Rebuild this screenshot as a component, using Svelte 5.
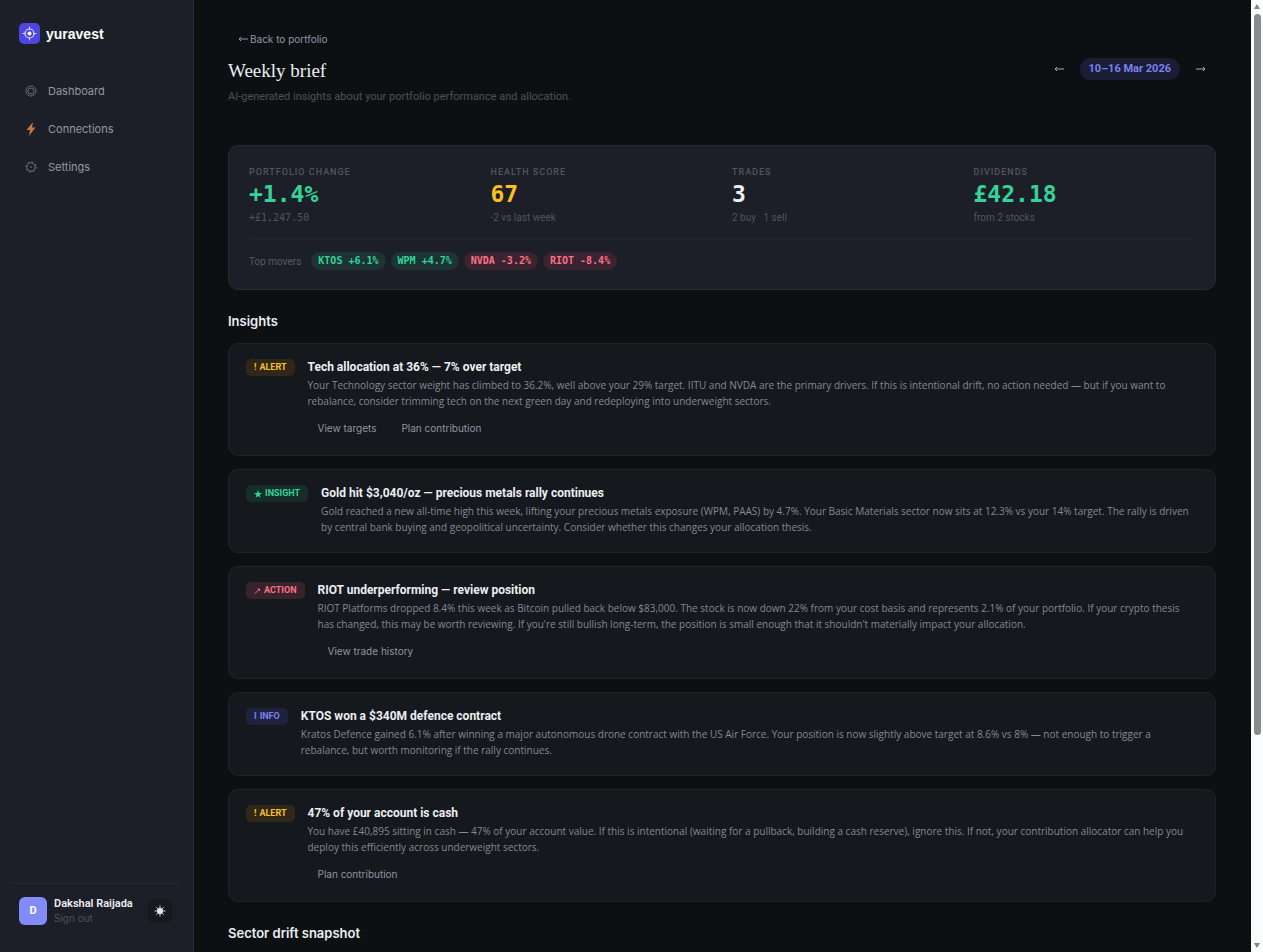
<script lang="ts">
  type Kind = 'alert' | 'insight' | 'action' | 'info';

  const stats = [
    { label: 'Portfolio change', value: '+1.4%', sub: '+£1,247.50', tone: 'green', mono: true },
    { label: 'Health score', value: '67', sub: '-2 vs last week', tone: 'amber' },
    { label: 'Trades', value: '3', sub: '2 buy \u00a0 1 sell', tone: 'plain' },
    { label: 'Dividends', value: '£42.18', sub: 'from 2 stocks', tone: 'green' }
  ];

  const movers = [
    { ticker: 'KTOS', change: '+6.1%' },
    { ticker: 'WPM', change: '+4.7%' },
    { ticker: 'NVDA', change: '-3.2%' },
    { ticker: 'RIOT', change: '-8.4%' }
  ];

  const insights: { kind: Kind; title: string; body: string; actions: string[] }[] = [
    {
      kind: 'alert',
      title: 'Tech allocation at 36% — 7% over target',
      body: 'Your Technology sector weight has climbed to 36.2%, well above your 29% target. IITU and NVDA are the primary drivers. If this is intentional drift, no action needed — but if you want to rebalance, consider trimming tech on the next green day and redeploying into underweight sectors.',
      actions: ['View targets', 'Plan contribution']
    },
    {
      kind: 'insight',
      title: 'Gold hit $3,040/oz — precious metals rally continues',
      body: 'Gold reached a new all-time high this week, lifting your precious metals exposure (WPM, PAAS) by 4.7%. Your Basic Materials sector now sits at 12.3% vs your 14% target. The rally is driven by central bank buying and geopolitical uncertainty. Consider whether this changes your allocation thesis.',
      actions: []
    },
    {
      kind: 'action',
      title: 'RIOT underperforming — review position',
      body: "RIOT Platforms dropped 8.4% this week as Bitcoin pulled back below $83,000. The stock is now down 22% from your cost basis and represents 2.1% of your portfolio. If your crypto thesis has changed, this may be worth reviewing. If you're still bullish long-term, the position is small enough that it shouldn't materially impact your allocation.",
      actions: ['View trade history']
    },
    {
      kind: 'info',
      title: 'KTOS won a $340M defence contract',
      body: 'Kratos Defence gained 6.1% after winning a major autonomous drone contract with the US Air Force. Your position is now slightly above target at 8.6% vs 8% — not enough to trigger a rebalance, but worth monitoring if the rally continues.',
      actions: []
    },
    {
      kind: 'alert',
      title: '47% of your account is cash',
      body: 'You have £40,895 sitting in cash — 47% of your account value. If this is intentional (waiting for a pullback, building a cash reserve), ignore this. If not, your contribution allocator can help you deploy this efficiently across underweight sectors.',
      actions: ['Plan contribution']
    }
  ];
</script>

<div class="app">
  <aside class="sidebar">
    <a class="brand" href="#home">
      <svg width="21" height="21" viewBox="0 0 21 21" fill="none">
        <rect width="21" height="21" rx="5" fill="#4f46e0" />
        <circle cx="10.5" cy="10.5" r="4.5" stroke="#dcdcff" stroke-width="1.2" />
        <circle cx="10.5" cy="10.5" r="2" fill="#fff" />
        <path d="M10.5 4v2M10.5 15v2M4 10.5h2M15 10.5h2" stroke="#dcdcff" stroke-linecap="round" />
      </svg>
      <span>yuravest</span>
    </a>

    <nav>
      <a href="#dashboard">
        <svg width="12" height="12" viewBox="0 0 12 12" fill="none" stroke="#7b7e88">
          <circle cx="6" cy="6" r="5" stroke-width="0.8" />
          <circle cx="6" cy="6" r="3" stroke-width="0.8" />
        </svg>
        Dashboard
      </a>
      <a href="#connections">
        <svg width="12" height="16" viewBox="0 0 12 16">
          <path d="M8 1 1.500 9h3.500L4 15 10.500 6.500H7z" fill="#c9743f" />
        </svg>
        Connections
      </a>
      <a href="#settings">
        <svg width="12" height="12" viewBox="0 0 12 12" fill="none" stroke="#7b7e88">
          <circle cx="6" cy="6" r="4.2" stroke-width="0.8" />
          <circle cx="6" cy="6" r="5.1" stroke-dasharray="1.6 2.4" />
          <circle cx="6" cy="6" r="0.8" fill="#7b7e88" stroke="none" />
        </svg>
        Settings
      </a>
    </nav>

    <div class="account">
      <div class="avatar">D</div>
      <div class="who">
        <strong>Dakshal Raijada</strong>
        <button class="signout">Sign out</button>
      </div>
      <button class="theme" aria-label="Toggle theme">
        <svg width="12" height="12" viewBox="0 0 12 12" stroke="#dfe1e5" stroke-linecap="round">
          <circle cx="6" cy="6" r="3" fill="#eceef2" stroke="none" />
          <path d="M6 1v10M1 6h10M2.500 2.500l7 7M9.500 2.500l-7 7" stroke-width="0.9" />
        </svg>
      </button>
    </div>
  </aside>

  <main>
    <header>
      <div>
        <a class="back" href="#portfolio">
          <svg width="10" height="8" viewBox="0 0 10 8" fill="none" stroke="currentColor"><path d="M10 4H1M3 2 1 4l2 2" /></svg>
          Back to portfolio
        </a>
        <h1>Weekly brief</h1>
        <p>AI-generated insights about your portfolio performance and allocation.</p>
      </div>
      <div class="period">
        <button aria-label="Previous week">
          <svg width="10" height="8" viewBox="0 0 10 8" fill="none" stroke="currentColor"><path d="M10 4H1M3 2 1 4l2 2" /></svg>
        </button>
        <span>10–16 Mar 2026</span>
        <button aria-label="Next week">
          <svg width="10" height="8" viewBox="0 0 10 8" fill="none" stroke="currentColor"><path d="M0 4h9M7 2l2 2-2 2" /></svg>
        </button>
      </div>
    </header>

    <section class="summary">
      <div class="stats">
        {#each stats as s}
          <div>
            <div class="label">{s.label}</div>
            <div class="value {s.tone}">{s.value}</div>
            <div class="sub" class:mono={s.mono}>{s.sub}</div>
          </div>
        {/each}
      </div>
      <div class="movers">
        <span class="movers-label">Top movers</span>
        {#each movers as m}
          <span class="mover" class:down={m.change.startsWith('-')}>{m.ticker} {m.change}</span>
        {/each}
      </div>
    </section>

    <h2>Insights</h2>
    <div class="list">
      {#each insights as item}
        <article>
          <span class="badge {item.kind}">
            {#if item.kind === 'insight'}
              <svg width="8" height="8" viewBox="0 0 8 8"><path d="M4 0l1 2.900H8L5.600 4.700l.9 3L4 5.900l-2.500 1.800.9-3L0 2.900h3z" fill="currentColor" /></svg>
            {:else if item.kind === 'action'}
              <svg width="7" height="8" viewBox="0 0 7 8" fill="none" stroke="currentColor"><path d="M1 6.500l4.500-4.500M3.500 2h2v2" /></svg>
            {:else if item.kind === 'info'}
              <span>I</span>
            {:else}
              <span>!</span>
            {/if}
            {item.kind}
          </span>
          <div class="content">
            <h3>{item.title}</h3>
            <p>{item.body}</p>
            {#if item.actions.length}
              <div class="actions">
                {#each item.actions as action}
                  <button>{action}</button>
                {/each}
              </div>
            {/if}
          </div>
        </article>
      {/each}
    </div>

    <h2>Sector drift snapshot</h2>
  </main>

  <div class="scrollbar" aria-hidden="true">
    <svg width="6" height="5" viewBox="0 0 6 5"><path d="M3 0l3 5H0z" fill="#858585" /></svg>
    <div class="track"><div class="thumb"></div></div>
    <svg width="6" height="5" viewBox="0 0 6 5"><path d="M3 5l3-5H0z" fill="#858585" /></svg>
  </div>
</div>

<style>
  :global(body) {
    background: #0d1013;
  }

  .app {
    display: flex;
    height: 100vh;
    overflow: hidden;
    font-family: Roboto, 'Liberation Sans', sans-serif;
    font-size: 11px;
    color: #eceef2;
  }

  a {
    color: inherit;
    text-decoration: none;
  }

  button {
    font: inherit;
    color: inherit;
    background: none;
    border: 0;
    padding: 0;
    cursor: pointer;
  }

  h1, h2, h3, p {
    margin: 0;
  }

  svg {
    flex: none;
    display: block;
  }

  /* sidebar */
  .sidebar {
    box-sizing: border-box;
    width: 194px;
    flex: none;
    display: flex;
    flex-direction: column;
    padding: 23px 13px 26px;
    background: #1c1f28;
    border-right: 1px solid #292c35;
  }

  .brand {
    display: flex;
    align-items: center;
    gap: 6px;
    padding-left: 6px;
    height: 21px;
    font: bold 14px 'Liberation Sans', Arial, sans-serif;
    color: #fff;
  }

  nav {
    display: flex;
    flex-direction: column;
    gap: 4px;
    margin-top: 30px;
  }

  nav a {
    display: flex;
    align-items: center;
    gap: 11px;
    height: 34px;
    padding-left: 12px;
    font-family: Inter, sans-serif;
    font-size: 11px;
    color: #9497a1;
  }

  .account {
    display: flex;
    align-items: center;
    margin-top: auto;
    padding: 12px 8px 0 6px;
    border-top: 1px solid #262932;
  }

  .avatar {
    width: 28px;
    height: 28px;
    border-radius: 6px;
    background: #818cf8;
    color: #fff;
    font-weight: 700;
    line-height: 28px;
    text-align: center;
  }

  .who {
    flex: 1;
    margin-left: 7px;
    line-height: 15px;
  }

  .who strong {
    display: block;
    font-weight: 600;
  }

  .signout {
    font-family: Inter, sans-serif;
    font-size: 10px;
    color: #4c505a;
  }

  .theme {
    display: grid;
    place-items: center;
    width: 24px;
    height: 24px;
    border-radius: 6px;
    background: #16191e;
  }

  /* page */
  main {
    flex: 1;
    min-width: 0;
    overflow: hidden;
    padding: 28px 35px 0 34px;
    background: #0d1013;
  }

  header {
    display: flex;
    align-items: center;
    justify-content: space-between;
    margin-bottom: 39px;
  }

  .back {
    display: flex;
    align-items: center;
    gap: 2px;
    height: 22px;
    padding-left: 10px;
    margin-bottom: 7px;
    font-family: Inter, sans-serif;
    font-size: 10px;
    color: #9295a0;
  }

  h1 {
    font: 400 19px/28px 'Liberation Serif', serif;
  }

  header p {
    margin-top: 3px;
    line-height: 18px;
    color: #4d515a;
  }

  .period {
    display: flex;
    align-items: center;
    gap: 6px;
    margin-top: 3px;
  }

  .period button {
    display: grid;
    place-items: center;
    width: 30px;
    height: 24px;
    color: #a9acb4;
  }

  .period span {
    padding: 0 9px;
    border-radius: 11px;
    background: #1b1d35;
    color: #7b80f0;
    font-weight: 700;
    line-height: 22px;
  }

  .summary {
    padding: 20px 20px 19px;
    border: 1px solid #272a33;
    border-radius: 10px;
    background: #1c1f28;
  }

  .stats {
    display: grid;
    grid-template-columns: repeat(4, 1fr);
    gap: 20px;
    padding-bottom: 13px;
    border-bottom: 1px solid #22252e;
  }

  .label {
    font-size: 9px;
    font-weight: 500;
    line-height: 12px;
    letter-spacing: 1px;
    text-transform: uppercase;
    color: #52565f;
  }

  .value {
    font: bold 23px/32px 'DejaVu Sans Mono', monospace;
  }

  .green { color: #34d399; }
  .amber { color: #fbbf24; }

  .sub {
    font-size: 10px;
    line-height: 16px;
    color: #50545e;
  }

  .mono {
    font-family: 'DejaVu Sans Mono', monospace;
  }

  .movers {
    display: flex;
    align-items: center;
    gap: 5px;
    padding-top: 12px;
  }

  .movers-label {
    margin-right: 5px;
    font-size: 10px;
    color: #565a64;
  }

  .mover {
    padding: 0 7px;
    border-radius: 9px;
    background: #1d3335;
    color: #34d399;
    font: bold 10px/18px 'DejaVu Sans Mono', monospace;
  }

  .mover.down {
    background: #3a2430;
    color: #fb7185;
  }

  h2 {
    margin: 22px 0 13px;
    font: 600 13px/18px Inter, sans-serif;
  }

  .list {
    display: flex;
    flex-direction: column;
    gap: 13px;
  }

  article {
    display: flex;
    align-items: flex-start;
    gap: 13px;
    padding: 15px 17px 17px;
    border: 1px solid #1f2327;
    border-radius: 10px;
    background: #15181c;
  }

  .badge {
    flex: none;
    display: flex;
    align-items: center;
    gap: 3px;
    padding: 0 8px;
    border-radius: 5px;
    font-size: 9px;
    font-weight: 700;
    line-height: 17px;
    text-transform: uppercase;
  }

  .alert { background: #2f2818; color: #fbbf24; }
  .insight { background: #162d2a; color: #34d399; }
  .action { background: #38222b; color: #fb7185; }
  .info { background: #20223d; color: #7b80f0; }

  .content {
    flex: 1;
    min-width: 0;
  }

  h3 {
    margin-bottom: 2px;
    font-size: 12px;
    font-weight: 700;
    line-height: 16px;
  }

  article p {
    font-family: 'Open Sans', sans-serif;
    font-size: 10px;
    line-height: 16px;
    color: #858992;
  }

  .actions {
    display: flex;
    gap: 5px;
    margin-top: 9px;
  }

  .actions button {
    height: 20px;
    padding: 0 10px;
    font-family: Inter, sans-serif;
    font-size: 10px;
    color: #9295a0;
  }

  /* scroll strip */
  .scrollbar {
    flex: none;
    display: flex;
    flex-direction: column;
    align-items: center;
    gap: 5px;
    width: 12px;
    box-sizing: border-box;
    padding: 4px 0;
    background: #fcfcfc;
  }

  .track {
    flex: 1;
  }

  .thumb {
    width: 7px;
    height: 78%;
    border-radius: 4px;
    background: #8b8b8b;
  }
</style>
